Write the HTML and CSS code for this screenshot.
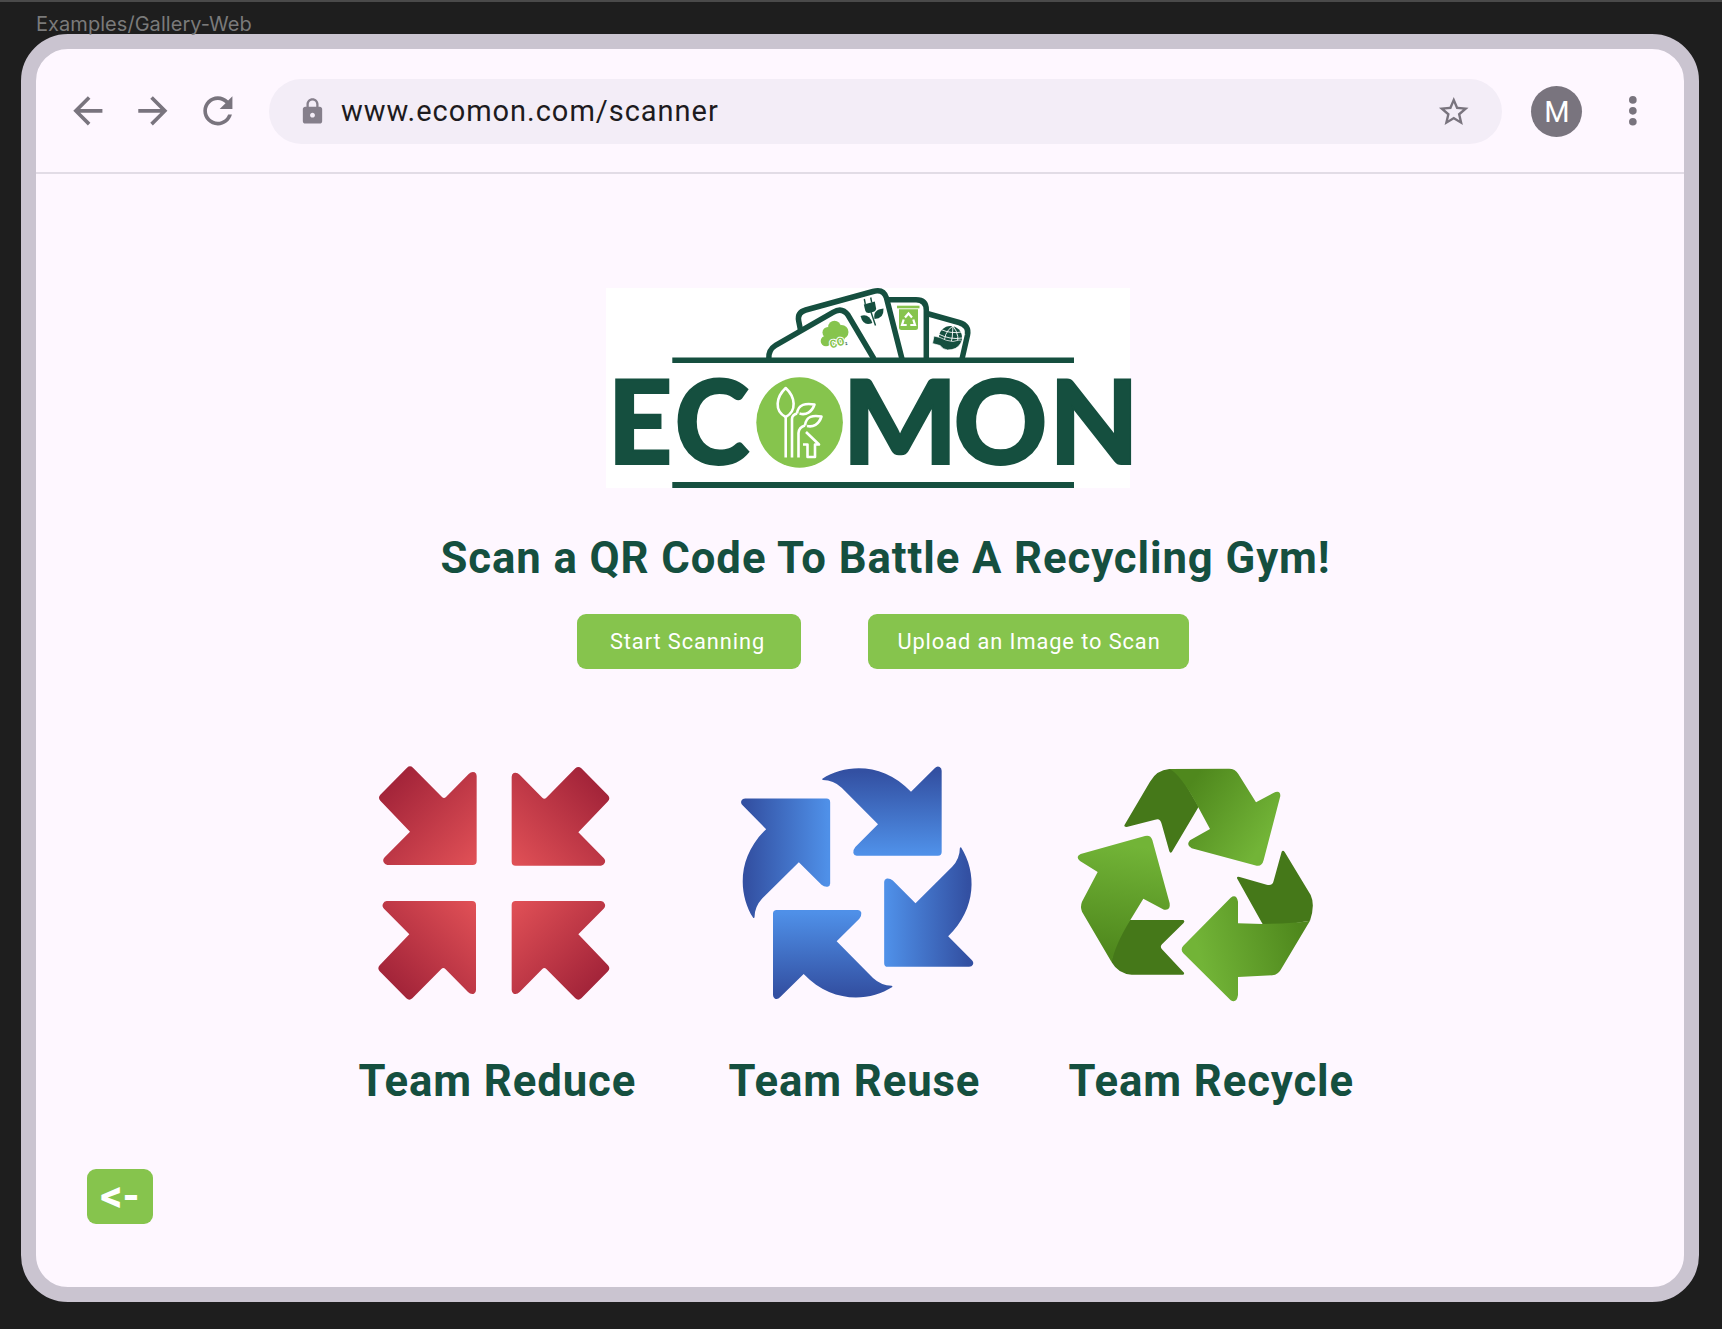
FILE: index.html
```html
<!DOCTYPE html>
<html lang="en">
<head>
<meta charset="utf-8">
<title>Ecomon Scanner</title>
<link rel="stylesheet" href="styles.css">
</head>
<body>
<div class="frame-label">Examples/Gallery-Web</div>
<div class="browser">
  <header class="toolbar">
    <nav class="nav">
      <svg class="icon" viewBox="0 0 24 24"><path d="M20 11H7.83l5.59-5.59L12 4l-8 8 8 8 1.41-1.41L7.83 13H20v-2z"/></svg>
      <svg class="icon" viewBox="0 0 24 24"><path d="M12 4l-1.41 1.41L16.17 11H4v2h12.17l-5.58 5.59L12 20l8-8z"/></svg>
      <svg class="icon" viewBox="0 0 24 24"><path d="M17.65 6.35C16.2 4.9 14.21 4 12 4c-4.42 0-7.99 3.58-7.99 8s3.57 8 7.99 8c3.73 0 6.84-2.55 7.73-6h-2.08c-.82 2.33-3.04 4-5.65 4-3.31 0-6-2.69-6-6s2.69-6 6-6c1.66 0 3.14.69 4.22 1.78L13 11h7V4l-2.35 2.35z"/></svg>
    </nav>
    <div class="address">
      <svg class="lock" viewBox="0 0 24 24"><path d="M18 8h-1V6c0-2.76-2.24-5-5-5S7 3.24 7 6v2H6c-1.1 0-2 .9-2 2v10c0 1.1.9 2 2 2h12c1.1 0 2-.9 2-2V10c0-1.1-.9-2-2-2zm-6 9c-1.1 0-2-.9-2-2s.9-2 2-2 2 .9 2 2-.9 2-2 2zm3.1-9H8.9V6c0-1.71 1.39-3.1 3.1-3.1s3.1 1.39 3.1 3.1v2z"/></svg>
      <span class="url">www.ecomon.com/scanner</span>
      <svg class="star" viewBox="0 0 24 24"><path d="M22 9.24l-7.19-.62L12 2 9.19 8.63 2 9.24l5.46 4.73L5.82 21 12 17.27 18.18 21l-1.63-7.03L22 9.24zM12 15.4l-3.76 2.27 1-4.28-3.32-2.88 4.38-.38L12 6.1l1.71 4.04 4.38.38-3.32 2.88 1 4.28L12 15.4z"/></svg>
    </div>
    <div class="avatar">M</div>
    <svg class="icon more" viewBox="0 0 24 24"><circle cx="12" cy="6" r="2.1"/><circle cx="12" cy="12" r="2.1"/><circle cx="12" cy="18" r="2.1"/></svg>
  </header>

  <main class="page">
    <svg class="logo" viewBox="606 288 524 200" role="img" aria-label="Ecomon">
      <rect class="paper" x="606" y="288" width="524" height="200"/>
      <g class="card">
        <path d="M768.8 359 Q768 350 776 345 L833 312.3 Q842 307 848 315 L874 359"/>
        <path d="M800.5 330 L798.7 321 Q797 312.500 805.700 310 L873 291.500 Q883.500 288.500 886.500 298 L902 359"/>
        <path d="M887 299.700 H916 Q926.300 299.700 926.300 310 V359"/>
        <path d="M927 313.500 L959 322.500 Q969.300 325.500 967.500 335 L962 359"/>
      </g>
      <g class="leaf">
        <circle cx="834.500" cy="327" r="6.300"/><circle cx="828" cy="332.500" r="5.500"/><circle cx="841.500" cy="332" r="7"/><circle cx="826" cy="341" r="5.300"/><circle cx="833" cy="338.500" r="7"/><circle cx="839" cy="337" r="6"/>
      </g>
      <text class="co2" transform="translate(831 348.500) rotate(-17)">CO<tspan class="sub" dy="1">2</tspan></text>
      <g class="ink">
        <path d="M863.800 304.500 L874.800 301.600 L876.200 309 Q875.500 311.300 873 312 L869 313 Q866 313.200 865.300 310.800Z"/>
        <path d="M860.500 316 Q869 313 872.300 323 Q863.500 327 860.500 316Z"/>
        <path d="M883.500 308.500 Q884 319 874.500 319 Q872.500 309.500 883.500 308.500Z"/>
      </g>
      <g class="stem"><path d="M865.300 304 L864.300 299"/><path d="M871.700 302.500 L870.700 297.500"/><path d="M871 312 L875.500 325.500"/></g>
      <g class="leaf"><rect x="897" y="305.700" width="22.500" height="2.600"/><path d="M899 309.300 H918 V327.500 Q918 330 915.500 330 H901.500 Q899 330 899 327.500Z"/></g>
      <g class="tri"><path d="M905 317.500 L908.500 313.500 L912 317.500"/><path d="M903.700 319.500 L902 325 H906.700"/><path d="M913.300 319.500 L915 325 H910.300"/></g>
      <circle class="ink" cx="950.500" cy="337.500" r="11.500"/>
      <g class="grid"><path d="M938.500 334 Q950 340 962 338"/><path d="M941 329.500 Q951 334 961.500 332"/><path d="M953 326 Q943 332 944 348"/><path d="M953 326 Q953 337 950 348"/><path d="M953 326 Q961 336 956 348"/><path d="M940 343 H961"/></g>
      <path class="hand" d="M934 336 L940 337.500 Q946 341 953 341.500 L959 340 Q963 340 960.500 343.500 Q957 350 947.500 350 Q943 349.500 940 345.500 L932.500 343.500Z"/>
      <path class="ink" d="M672.300 357.500H1074v5.500H672.300zM672.300 482H1074v6H672.300z"/>
      <g class="word">
        <text x="607.500" y="464.300" textLength="65" lengthAdjust="spacingAndGlyphs">E</text>
        <text x="674.500" y="464.300" textLength="75" lengthAdjust="spacingAndGlyphs">C</text>
        <text x="842" y="464.300" textLength="116" lengthAdjust="spacingAndGlyphs">M</text>
        <text x="953.500" y="464.300" textLength="94" lengthAdjust="spacingAndGlyphs">O</text>
        <text x="1049" y="464.300" textLength="90" lengthAdjust="spacingAndGlyphs">N</text>
      </g>
      <ellipse class="leaf" cx="799.600" cy="422.500" rx="43.300" ry="45.300"/>
      <g class="sprout">
        <path d="M785.700 388 C776 397 774 411 785.700 417 C797 411 795.500 397 785.700 388Z"/>
        <path d="M785.700 417 V457.500"/><path d="M792 457.500 V419 Q792 415 797 413.500"/><path d="M798.500 457.500 V433 Q799 427 805 425.500"/>
        <path d="M797 413.500 C798 404 806 403 814.500 404.500 C812 412 806 415.500 799.500 413.500"/>
        <path d="M805 425.500 C806 416 813 415 821.500 416.500 C819 424.500 813 427.500 807 426"/>
        <path d="M806 432 L819 444.500 H815 V457 H807.500 V444.500 H803"/>
      </g>
    </svg>

    <h1 class="title">Scan a QR Code To Battle A Recycling Gym!</h1>

    <div class="actions">
      <button class="btn start">Start Scanning</button>
      <button class="btn upload">Upload an Image to Scan</button>
    </div>

    <section class="teams">
      <figure class="team">
        <svg width="270" height="260" viewBox="0 0 810 780">
          <defs>
            <linearGradient id="red" gradientUnits="userSpaceOnUse" x1="345" y1="340" x2="85" y2="85"><stop offset="0" stop-color="#e05056"/><stop offset="1" stop-color="#a02238"/></linearGradient>
            <path id="inward" fill="url(#red)" d="M141 53 Q150 45 159 53 L246 141 Q252 147 258 141 L326 72 Q334 64 344 67 Q350 70 350 78 V333 Q350 345 338 345 H82 Q74 344 71 337 Q67 329 74 322 L150 245 L61 152 Q53 143 61 134Z"/>
          </defs>
          <use href="#inward"/>
          <use href="#inward" transform="translate(805 2) scale(-1 1)"/>
          <use href="#inward" transform="translate(-2 798) scale(1 -1)"/>
          <use href="#inward" transform="translate(805 798) scale(-1 -1)"/>
        </svg>
        <figcaption>Team Reduce</figcaption>
      </figure>
      <figure class="team">
        <svg width="260" height="260" viewBox="0 0 780 780">
          <defs>
            <linearGradient id="blue" gradientUnits="userSpaceOnUse" x1="0" y1="65" x2="0" y2="310"><stop offset="0" stop-color="#3350a2"/><stop offset="1" stop-color="#4f90e8"/></linearGradient>
            <path id="swirl" fill="url(#blue)" d="M277 86 C350 40 460 38 543 125 L614 55 Q621 47 629 51 Q635 54 635 62 V306 Q635 317 624 317 H380 Q372 317 370 309 Q369 299 376 291 L444 223 L335 113 Q310 90 279 90 Q275 88 277 86Z"/>
          </defs>
          <use href="#swirl"/>
          <use href="#swirl" transform="rotate(90 382 397.500)"/>
          <use href="#swirl" transform="rotate(180 382 398.500)"/>
          <use href="#swirl" transform="rotate(270 382 398.500)"/>
        </svg>
        <figcaption>Team Reuse</figcaption>
      </figure>
      <figure class="team">
        <svg width="270" height="260" viewBox="0 0 810 780">
          <defs>
            <linearGradient id="g1" gradientUnits="userSpaceOnUse" x1="400" y1="90" x2="630" y2="250"><stop offset="0" stop-color="#4f881d"/><stop offset="1" stop-color="#72b437"/></linearGradient>
            <linearGradient id="g2" gradientUnits="userSpaceOnUse" x1="720" y1="540" x2="420" y2="620"><stop offset="0" stop-color="#4f881d"/><stop offset="1" stop-color="#72b437"/></linearGradient>
            <linearGradient id="g3" gradientUnits="userSpaceOnUse" x1="200" y1="285" x2="150" y2="610"><stop offset="0" stop-color="#72b437"/><stop offset="1" stop-color="#4f881d"/></linearGradient>
          </defs>
          <g class="fold">
            <path d="M194 224 L270 95 Q290 60 328 57 H350 L416 170 L336 305 Q331 312 328 304 L305 222 Q301 203 285 209 L200 231 Q190 230 194 224Z"/>
            <path d="M609 524 L531 385 Q530 378 539 381 L620 404 Q637 409 641 392 L665 305 Q669 299 674 306 L752 435 Q766 465 750 512 L690 522Z"/>
            <path d="M209 510 H370 Q376 514 370 520 L306 583 Q299 590 306 598 L372 668 Q374 674 366 674 H215 Q175 672 155 637 L160 580Z"/>
          </g>
          <path fill="url(#g1)" d="M328 57 L505 56 Q525 55 535 72 L588 157 L640 129 Q661 119 661 138 L611 330 Q606 350 590 347 L395 295 Q377 285 390 271 L450 237 L414 170 Q360 70 328 57Z"/>
          <path fill="url(#g2)" d="M750 512 L665 655 Q655 675 637 676 L534 681 V735 Q530 761 512 751 L370 610 Q360 598 370 587 L512 443 Q529 431 534 455 V520 L607 522 Q700 521 750 512Z"/>
          <path fill="url(#g3)" d="M155 637 L66 485 Q60 470 66 455 L113 366 L60 333 Q45 320 62 312 L255 258 Q272 254 277 270 L329 460 Q332 483 312 479 L250 446 L211 510 Q165 585 155 637Z"/>
        </svg>
        <figcaption class="recycle">Team Recycle</figcaption>
      </figure>
    </section>

    <button class="back">&lt;-</button>
  </main>
</div>
</body>
</html>
```

FILE: styles.css
```css
* { box-sizing: border-box; }
body {
  margin: 0;
  height: 1329px;
  overflow: hidden;
  background: #1e1e1e;
  border-top: 2px solid #4a4a4a;
  font-family: Roboto, sans-serif;
}
.frame-label {
  height: 32px;
  padding: 9.5px 0 0 36px;
  font: 400 20px/24px Inter, sans-serif;
  letter-spacing: 0.05px;
  color: #7a7a7a;
}
.browser {
  width: 1678px;
  height: 1268px;
  margin-left: 21px;
  border: 15px solid #cac4d0;
  border-radius: 47px;
  background: #fef7ff;
}
.toolbar {
  display: flex;
  align-items: center;
  height: 125px;
  padding: 1.5px 28px 0 29.5px;
  border-bottom: 2px solid #e2dce6;
}
.icon { flex: none; width: 43.7px; height: 43.7px; fill: #79747e; }
.nav { display: flex; gap: 21.7px; }
.address {
  display: flex;
  align-items: center;
  width: 1233px;
  height: 65.5px;
  margin-left: 29.5px;
  padding: 0 30.5px 0 28.5px;
  border-radius: 33px;
  background: #f3edf7;
}
.lock { width: 29px; height: 29px; fill: #857f8b; }
.url {
  margin-left: 14px;
  font-size: 29px;
  letter-spacing: 0.98px;
  color: #1d1b20;
}
.star { width: 35.5px; height: 35.5px; margin-left: auto; fill: #79747e; }
.avatar {
  width: 51px;
  height: 51px;
  margin-left: 29px;
  border-radius: 50%;
  background: #79747e;
  color: #fff;
  font-size: 29px;
  line-height: 52px;
  text-align: center;
}
.more { margin-left: 29px; }

.page { padding-top: 114px; }
.logo { display: block; width: 524px; height: 200px; margin-left: 570px; overflow: visible; }
.paper { fill: #fff; }
.card { fill: none; stroke: #154f3f; stroke-width: 5.5; }
.ink, .hand { fill: #154f3f; }
.hand { stroke: #fff; stroke-width: 0.7; }
.leaf { fill: #86c44d; }
.stem { fill: none; stroke: #154f3f; stroke-width: 1.4; }
.tri { fill: none; stroke: #fff; stroke-width: 2.2; }
.grid { fill: none; stroke: #fff; stroke-width: 0.9; }
.co2 { font: 700 11px Roboto, sans-serif; fill: #86c44d; stroke: #fff; stroke-width: 2; paint-order: stroke; }
.sub { font-size: 4px; fill: #154f3f; stroke: none; }
.word { font: 900 116.5px Lato, sans-serif; fill: #154f3f; stroke: #154f3f; stroke-width: 1.8; }
.sprout { fill: none; stroke: #fff; stroke-width: 2.6; stroke-linejoin: round; }
.fold { fill: #457819; }

.title {
  margin: 43.5px 0 0 404.5px;
  font-size: 43.7px;
  line-height: 52px;
  font-weight: 700;
  letter-spacing: 0.92px;
  white-space: nowrap;
  color: #154f3f;
}
.actions { display: flex; gap: 67px; margin: 30px 0 0 541px; }
.btn, .back {
  display: block;
  padding: 0;
  height: 55px;
  border: 0;
  border-radius: 9px;
  background: #86c44d;
  color: #fff;
  font-family: Roboto, sans-serif;
}
.btn { font-size: 21.8px; letter-spacing: 0.92px; }
.start { width: 224px; padding-right: 3px; }
.upload { width: 321px; padding-left: 1px; }
.teams { display: grid; grid-template-columns: 370px 330px 320px; margin: 81px 0 0 324px; }
.team { margin: 0; }
.team svg { display: block; }
figcaption {
  margin: 45.5px 0 0 -1.5px;
  font-size: 43.7px;
  line-height: 52px;
  font-weight: 700;
  letter-spacing: 0.9px;
  white-space: nowrap;
  color: #154f3f;
}
figcaption.recycle { margin-left: 8.5px; }
.back {
  width: 66px;
  margin: 61.5px 0 0 51px;
  font-size: 43.7px;
  font-weight: 700;
  line-height: 55px;
}
```
